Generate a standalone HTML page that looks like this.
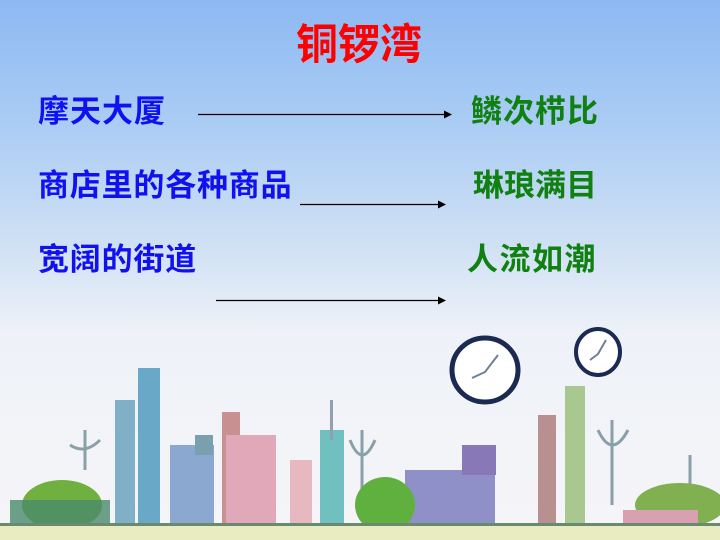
<!DOCTYPE html>
<html><head><meta charset="utf-8"><style>
body{margin:0;width:720px;height:540px;overflow:hidden;position:relative;
background:linear-gradient(to bottom,#8db8f2 0%,#a9ccf4 22%,#cfe0f4 45%,#eef2f8 62%,#f6f5f8 100%);
font-family:"Liberation Sans","Noto Sans CJK SC",sans-serif;font-weight:bold}
.t{position:absolute;white-space:nowrap;line-height:1}
</style></head><body>
<div class="t" style="left:296px;top:24px;font-size:42px;color:#ff0000;letter-spacing:0px">铜锣湾</div>
<div class="t" style="left:38px;top:96px;font-size:31px;color:#1010f0;letter-spacing:1px">摩天大厦</div>
<div class="t" style="left:38px;top:170px;font-size:31px;color:#1010f0;letter-spacing:0.8px">商店里的各种商品</div>
<div class="t" style="left:38px;top:244px;font-size:31px;color:#1010f0;letter-spacing:0.8px">宽阔的街道</div>
<div class="t" style="left:471px;top:96px;font-size:31px;color:#108010;letter-spacing:1px">鳞次栉比</div>
<div class="t" style="left:473px;top:170px;font-size:31px;color:#108010;letter-spacing:0px">琳琅满目</div>
<div class="t" style="left:467px;top:244px;font-size:31px;color:#108010;letter-spacing:1.5px">人流如潮</div>
<svg width="720" height="540" style="position:absolute;left:0;top:0">
<g stroke="#000" stroke-width="1.3"><line x1="198" y1="114.5" x2="446" y2="114.5"/><line x1="300" y1="204.5" x2="440" y2="204.5"/><line x1="216" y1="300.5" x2="440" y2="300.5"/></g>
<g fill="#000"><path d="M452 114.5 l-8 -4 v8z"/><path d="M446 204.5 l-8 -4 v8z"/><path d="M446 300.5 l-8 -4 v8z"/></g>
<ellipse cx="485" cy="370" rx="33" ry="32" fill="#fff" stroke="#1a2a50" stroke-width="5"/>
<path d="M472 378 L485 372 L498 355" stroke="#708090" stroke-width="2" fill="none"/>
<ellipse cx="598" cy="352" rx="22" ry="23" fill="#fff" stroke="#1a2a50" stroke-width="4"/>
<path d="M590 360 L598 354 L606 340" stroke="#708090" stroke-width="2" fill="none"/>
<g stroke="#8aa0a8" stroke-width="3" fill="none">
<path d="M85 470 V430 M70 445 Q85 455 100 440"/><path d="M362 490 V430 M350 440 Q362 470 375 440"/>
<path d="M612 505 V420 M598 430 Q612 460 628 430"/><path d="M690 500 V455"/>
</g>
<rect x="115" y="400" width="20" height="125" fill="#7fb0c8"/>
<rect x="138" y="368" width="22" height="157" fill="#6aa8c8"/>
<rect x="170" y="445" width="44" height="80" fill="#8aa8d0"/>
<rect x="195" y="435" width="18" height="20" fill="#7aa0b0"/>
<rect x="222" y="412" width="18" height="113" fill="#c89090"/>
<rect x="226" y="435" width="50" height="90" fill="#e0a8b8"/>
<rect x="290" y="460" width="22" height="65" fill="#e8b8c0"/>
<rect x="320" y="430" width="24" height="95" fill="#70c0c0"/>
<rect x="330" y="400" width="3" height="40" fill="#90a0b0"/>
<rect x="405" y="470" width="90" height="55" fill="#9090c8"/>
<rect x="462" y="445" width="34" height="30" fill="#8878b8"/>
<rect x="538" y="415" width="18" height="110" fill="#b89090"/>
<rect x="565" y="386" width="20" height="139" fill="#a8c890"/>
<ellipse cx="62" cy="505" rx="40" ry="25" fill="#70b040"/>
<ellipse cx="385" cy="505" rx="30" ry="28" fill="#60b040"/>
<ellipse cx="680" cy="505" rx="45" ry="22" fill="#80b050"/>
<rect x="10" y="500" width="100" height="25" fill="#4a8a6a" opacity=".8"/>
<rect x="623" y="510" width="75" height="25" fill="#d8a0b0"/>
<rect x="0" y="525" width="720" height="15" fill="#e8ecc0"/>
<rect x="0" y="523" width="720" height="3" fill="#6a8a70"/>
</svg>
</body></html>
